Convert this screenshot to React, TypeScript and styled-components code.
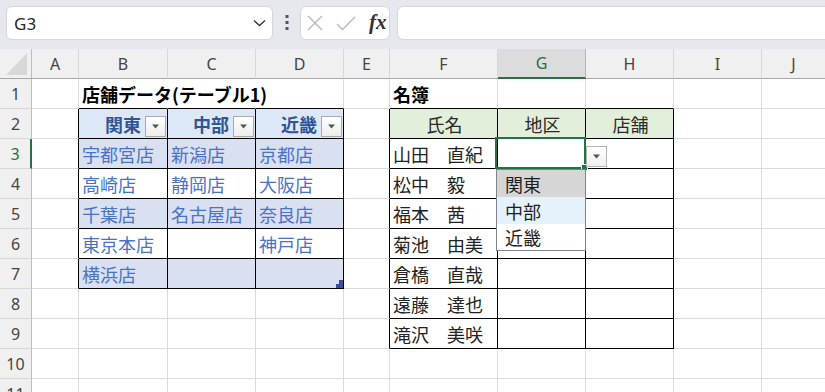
import React from 'react';
import styled, { createGlobalStyle } from 'styled-components';

const GlobalStyle = createGlobalStyle`
  html, body {
    margin: 0;
    padding: 0;
    background: #ffffff;
    overflow: hidden;
  }
  body {
    font-family: 'Noto Sans', 'Noto Sans CJK JP', sans-serif;
  }
`;

// sheet geometry (px, right border included)
const COLS = ['A', 'B', 'C', 'D', 'E', 'F', 'G', 'H', 'I', 'J'];
const WIDTHS = [47, 89, 88, 88, 46, 108, 88, 88, 88, 64];
const ROW_COUNT = 11;
const GRID = '#dadada';
const INK = '#000000';
const GREEN = '#217346';

const inT1 = (r: number, c: number) => r >= 2 && r <= 7 && c >= 1 && c <= 3;
const inT2 = (r: number, c: number) => r >= 2 && r <= 9 && c >= 5 && c <= 7;
const inTable = (r: number, c: number) => inT1(r, c) || inT2(r, c);

const STORES: Record<string, string> = {
  B3: '宇都宮店', C3: '新潟店', D3: '京都店',
  B4: '高崎店', C4: '静岡店', D4: '大阪店',
  B5: '千葉店', C5: '名古屋店', D5: '奈良店',
  B6: '東京本店', D6: '神戸店',
  B7: '横浜店',
};

const NAMES = ['山田　直紀', '松中　毅', '福本　茜', '菊池　由美', '倉橋　直哉', '遠藤　達也', '滝沢　美咲'];

/* ---------- formula bar ---------- */

const Toolbar = styled.div`
  display: flex;
  align-items: flex-start;
  height: 49px;
  box-sizing: border-box;
  padding: 6px 0 0 6px;
  background: #e6e8ee;
`;

const NameBox = styled.div`
  width: 267px;
  height: 34px;
  box-sizing: border-box;
  display: flex;
  align-items: center;
  justify-content: space-between;
  padding: 0 6px 0 7px;
  background: #ffffff;
  border: 1px solid #d4d6db;
  border-radius: 6px;
  font-family: 'Noto Sans', sans-serif;
  font-size: 17px;
  color: #262626;
`;

const DotsBox = styled.div`
  width: 27px;
  height: 34px;
  display: flex;
  align-items: center;
  justify-content: center;
`;

const FuncBox = styled.div`
  width: 90px;
  height: 34px;
  box-sizing: border-box;
  display: flex;
  align-items: center;
  gap: 13px;
  padding-left: 6px;
  background: #ffffff;
  border: 1px solid #d4d6db;
  border-radius: 6px;
`;

const Fx = styled.span`
  font-family: 'Liberation Serif', serif;
  font-style: italic;
  font-weight: bold;
  font-size: 21px;
  color: #333333;
  line-height: 1;
  margin-top: -2px;
`;

const FormulaBox = styled.div`
  flex: 1;
  height: 34px;
  margin-left: 7px;
  box-sizing: border-box;
  background: #ffffff;
  border: 1px solid #d4d6db;
  border-right: none;
  border-radius: 6px 0 0 6px;
`;

/* ---------- sheet ---------- */

const Sheet = styled.div`
  display: grid;
  grid-template-columns: 32px ${WIDTHS.map((w) => `${w}px`).join(' ')};
  grid-auto-rows: 30px;
  height: 343px;
  overflow: hidden;
  background: #ffffff;
`;

const Corner = styled.div`
  box-sizing: border-box;
  background: #f0f0f0;
  border-right: 1px solid #bdbdbd;
  border-bottom: 1px solid #a8a8a8;
  display: flex;
  align-items: flex-end;
  justify-content: flex-end;
  padding: 0 4px 3px 0;
`;

const ColHead = styled.div<{ $active?: boolean }>`
  box-sizing: border-box;
  display: flex;
  align-items: center;
  justify-content: center;
  background: ${(p) => (p.$active ? '#dcdcdc' : '#f0f0f0')};
  border-right: 1px solid ${(p) => (p.$active ? '#b5b5b5' : '#d7d7d7')};
  border-bottom: ${(p) => (p.$active ? `2px solid ${GREEN}` : '1px solid #a8a8a8')};
  font-family: 'Noto Sans', sans-serif;
  font-size: 16px;
  color: ${(p) => (p.$active ? GREEN : '#444444')};
`;

const RowHead = styled.div<{ $active?: boolean }>`
  box-sizing: border-box;
  display: flex;
  align-items: center;
  justify-content: center;
  background: #f0f0f0;
  border-right: ${(p) => (p.$active ? `2px solid ${GREEN}` : '1px solid #bdbdbd')};
  border-bottom: 1px solid #d7d7d7;
  font-family: 'Noto Sans', sans-serif;
  font-size: 16px;
  color: ${(p) => (p.$active ? GREEN : '#444444')};
`;

const Cell = styled.div<{
  $right: string;
  $bottom: string;
  $bg?: string;
  $color?: string;
  $bold?: boolean;
  $align?: 'flex-start' | 'center' | 'flex-end';
  $front?: boolean;
}>`
  position: relative;
  box-sizing: border-box;
  display: flex;
  align-items: center;
  justify-content: ${(p) => p.$align || 'flex-start'};
  gap: 4px;
  padding: 0 1px 0 3px;
  white-space: nowrap;
  background: ${(p) => p.$bg || 'transparent'};
  border-right: 1px solid ${(p) => p.$right};
  border-bottom: 1px solid ${(p) => p.$bottom};
  font-family: 'Noto Sans CJK JP', sans-serif;
  font-size: 18px;
  font-weight: ${(p) => (p.$bold ? 700 : 400)};
  line-height: 1;
  color: ${(p) => p.$color || '#222222'};
  z-index: ${(p) => (p.$front ? 5 : 'auto')};
`;

const FilterButton = styled.div`
  width: 21px;
  height: 21px;
  box-sizing: border-box;
  align-self: flex-end;
  margin-bottom: 1px;
  display: flex;
  align-items: center;
  justify-content: center;
  background: linear-gradient(#ffffff, #ededed);
  border: 1px solid #a9a9a9;
  flex-shrink: 0;
`;

const SelectionFrame = styled.div`
  position: absolute;
  left: -3px;
  top: -2px;
  width: 91px;
  height: 32px;
  box-sizing: border-box;
  border: 2px solid ${GREEN};
  pointer-events: none;
`;

const FillHandle = styled.div`
  position: absolute;
  right: -4px;
  bottom: -4px;
  width: 5px;
  height: 5px;
  background: ${GREEN};
  border: 1px solid #ffffff;
`;

const ListButton = styled(FilterButton)`
  position: absolute;
  left: 88px;
  top: 7px;
  margin: 0;
  background: linear-gradient(#ffffff, #f0f0f0);
  border-color: #b4b4b4;
`;

const DropList = styled.div`
  position: absolute;
  left: -2px;
  top: 30px;
  width: 90px;
  box-sizing: border-box;
  display: flex;
  flex-direction: column;
  background: #ffffff;
  border: 1px solid #7f848c;
`;

const DropItem = styled.div<{ $state?: 'selected' | 'hover' }>`
  height: 27px;
  display: flex;
  align-items: center;
  padding-left: 8px;
  background: ${(p) =>
    p.$state === 'selected' ? '#d6d6d6' : p.$state === 'hover' ? '#e5f1fb' : '#ffffff'};
  font-family: 'Noto Sans CJK JP', sans-serif;
  font-size: 18px;
  color: #1e1e1e;
  &:last-child {
    height: 26px;
  }
`;

const ResizeMark = styled.svg`
  position: absolute;
  right: 0;
  bottom: 0;
`;

const Triangle = () => (
  <svg width="9" height="5" viewBox="0 0 9 5">
    <path d="M1 0.5h7L4.5 4.5z" fill="#555555" />
  </svg>
);

const App: React.FC = () => {
  const renderCell = (r: number, c: number) => {
    const col = COLS[c];
    const key = `${col}${r}`;
    let right = inTable(r, c) || inTable(r, c + 1) ? INK : GRID;
    const bottom = inTable(r, c) || inTable(r + 1, c) ? INK : GRID;

    // title overflows across B1:D1
    if (r === 1 && (col === 'B' || col === 'C')) right = 'transparent';

    if (key === 'B1') {
      return (
        <Cell key={key} $right={right} $bottom={bottom} $bold $color="#000000">
          店舗データ(テーブル1)
        </Cell>
      );
    }
    if (key === 'F1') {
      return (
        <Cell key={key} $right={right} $bottom={bottom} $bold $color="#000000">
          名簿
        </Cell>
      );
    }

    // table 1 header row
    if (inT1(r, c) && r === 2) {
      const label = { B: '関東', C: '中部', D: '近畿' }[col as 'B' | 'C' | 'D'];
      return (
        <Cell key={key} $right={right} $bottom={bottom} $bg="#dde8f6" $color="#305496" $bold $align="flex-end">
          {label}
          <FilterButton>
            <Triangle />
          </FilterButton>
        </Cell>
      );
    }

    // table 1 body, banded
    if (inT1(r, c)) {
      const band = r % 2 === 1 ? '#d9e0f2' : '#ffffff';
      return (
        <Cell key={key} $right={right} $bottom={bottom} $bg={band} $color="#4a72c4">
          {STORES[key] || ''}
          {key === 'D7' && (
            <ResizeMark width="7" height="8" viewBox="0 0 7 8">
              <path d="M3 0h4v8H0V4h3z" fill="#3c4fa8" />
            </ResizeMark>
          )}
        </Cell>
      );
    }

    // table 2 header
    if (inT2(r, c) && r === 2) {
      const label = { F: '氏名', G: '地区', H: '店舗' }[col as 'F' | 'G' | 'H'];
      return (
        <Cell key={key} $right={right} $bottom={bottom} $bg="#e2efda" $color="#2a2a2a" $align="center">
          {label}
        </Cell>
      );
    }

    if (key === 'G3') {
      return (
        <Cell key={key} $right={right} $bottom={bottom} $front>
          <SelectionFrame>
            <FillHandle />
          </SelectionFrame>
          <ListButton>
            <Triangle />
          </ListButton>
          <DropList>
            <DropItem $state="selected">関東</DropItem>
            <DropItem $state="hover">中部</DropItem>
            <DropItem>近畿</DropItem>
          </DropList>
        </Cell>
      );
    }

    if (col === 'F' && r >= 3 && r <= 9) {
      return (
        <Cell key={key} $right={right} $bottom={bottom} $color="#222222">
          {NAMES[r - 3]}
        </Cell>
      );
    }

    return <Cell key={key} $right={right} $bottom={bottom} />;
  };

  const rows = Array.from({ length: ROW_COUNT }, (_, i) => i + 1);

  return (
    <>
      <GlobalStyle />
      <Toolbar>
        <NameBox>
          <span>G3</span>
          <svg width="13" height="8" viewBox="0 0 13 8">
            <path d="M1 1.5l5.5 5 5.5-5" fill="none" stroke="#333333" strokeWidth="1.3" />
          </svg>
        </NameBox>
        <DotsBox>
          <svg width="4" height="16" viewBox="0 0 4 16">
            <rect x="0.5" y="0" width="3" height="3" fill="#555555" />
            <rect x="0.5" y="6" width="3" height="3" fill="#555555" />
            <rect x="0.5" y="12" width="3" height="3" fill="#555555" />
          </svg>
        </DotsBox>
        <FuncBox>
          <svg width="16" height="16" viewBox="0 0 16 16">
            <path d="M1 1l14 14M15 1L1 15" stroke="#b8b8b8" strokeWidth="1.4" fill="none" />
          </svg>
          <svg width="20" height="15" viewBox="0 0 20 15">
            <path d="M1 8l5.5 5.5L19 1" stroke="#b8b8b8" strokeWidth="1.4" fill="none" />
          </svg>
          <Fx>fx</Fx>
        </FuncBox>
        <FormulaBox />
      </Toolbar>
      <Sheet>
        <Corner>
          <svg width="21" height="22" viewBox="0 0 21 22">
            <path d="M21 0v22H0z" fill="#d8d8d8" />
          </svg>
        </Corner>
        {COLS.map((col) => (
          <ColHead key={col} $active={col === 'G'}>
            {col}
          </ColHead>
        ))}
        {rows.map((r) => (
          <React.Fragment key={r}>
            <RowHead $active={r === 3}>{r}</RowHead>
            {COLS.map((_, c) => renderCell(r, c))}
          </React.Fragment>
        ))}
      </Sheet>
    </>
  );
};

export default App;
